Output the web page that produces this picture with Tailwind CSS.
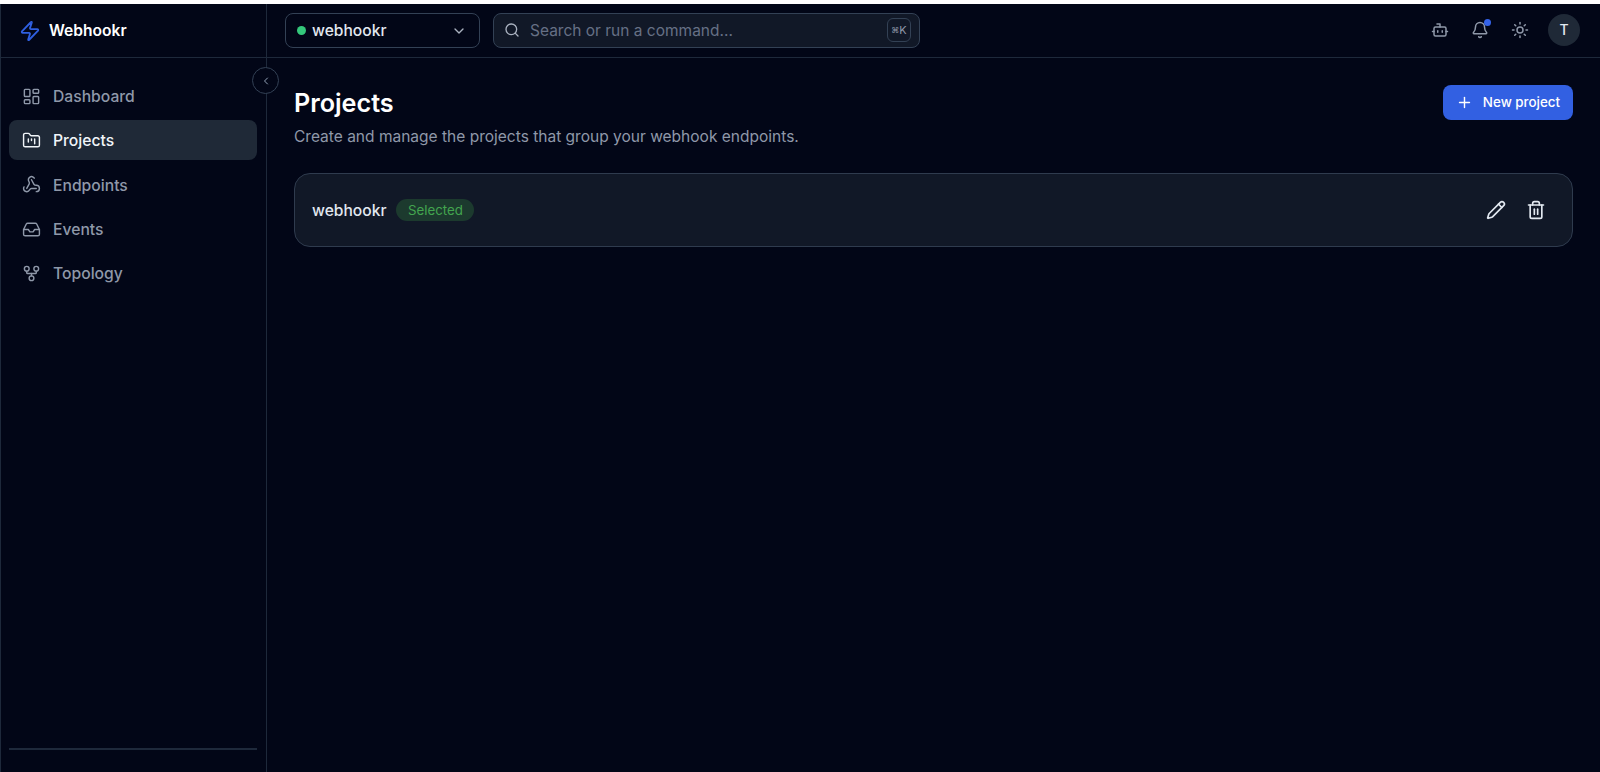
<!DOCTYPE html>
<html lang="en">
<head>
  <meta charset="UTF-8" />
  <title>Webhookr - Projects</title>
  <script src="https://cdn.jsdelivr.net/npm/@tailwindcss/browser@4"></script>
</head>
<body class="bg-white h-[772px] overflow-hidden font-['Inter',sans-serif] flex flex-col">
  <div class="h-1 bg-white"></div>
  <div class="flex-1 flex bg-[#020617] relative">
    <!-- Sidebar -->
    <aside class="w-[267px] shrink-0 border-l border-r border-[#1e293b] flex flex-col relative">
      <div class="h-[54px] border-b border-[#1e293b] flex items-center pl-[18px] gap-2">
        <svg class="w-[22px] h-[22px] text-[#2f5fe0]" viewBox="0 0 24 24" fill="none" stroke="currentColor" stroke-width="2" stroke-linecap="round" stroke-linejoin="round"><path d="M4 14a1 1 0 0 1-.78-1.63l9.9-10.2a.5.5 0 0 1 .86.46l-1.92 6.02A1 1 0 0 0 13 10h7a1 1 0 0 1 .78 1.63l-9.9 10.2a.5.5 0 0 1-.86-.46l1.92-6.02A1 1 0 0 0 11 14z"/></svg>
        <span class="text-white text-[15.6px] font-semibold pt-[1px]">Webhookr</span>
      </div>
      <nav class="flex-1 pl-2 pr-[9px] pt-[18px] flex flex-col gap-[4.4px] text-[15.7px] font-medium text-[#8f98a9]">
        <a class="h-10 flex items-center gap-3 px-[13px] rounded-lg">
          <svg class="w-[19px] h-[19px]" viewBox="0 0 24 24" fill="none" stroke="currentColor" stroke-width="1.8" stroke-linecap="round" stroke-linejoin="round"><rect width="7" height="9" x="3" y="3" rx="1"/><rect width="7" height="5" x="14" y="3" rx="1"/><rect width="7" height="9" x="14" y="12" rx="1"/><rect width="7" height="5" x="3" y="16" rx="1"/></svg>
          <span class="pt-[1px]">Dashboard</span>
        </a>
        <a class="h-10 flex items-center gap-3 px-[13px] rounded-lg bg-[#1f2937] text-[#f1f5f9]">
          <svg class="w-[19px] h-[19px]" viewBox="0 0 24 24" fill="none" stroke="currentColor" stroke-width="1.8" stroke-linecap="round" stroke-linejoin="round"><path d="M4 20h16a2 2 0 0 0 2-2V8a2 2 0 0 0-2-2h-7.93a2 2 0 0 1-1.66-.9l-.82-1.2A2 2 0 0 0 7.93 3H4a2 2 0 0 0-2 2v13c0 1.1.9 2 2 2Z"/><path d="M8 10v4"/><path d="M12 10v2"/><path d="M16 10v6"/></svg>
          <span>Projects</span>
        </a>
        <a class="h-10 flex items-center gap-3 px-[13px] rounded-lg">
          <svg class="w-[19px] h-[19px]" viewBox="0 0 24 24" fill="none" stroke="currentColor" stroke-width="1.8" stroke-linecap="round" stroke-linejoin="round"><path d="M18 16.98h-5.99c-1.1 0-1.95.94-2.48 1.9A4 4 0 0 1 2 17c.01-.7.2-1.4.57-2"/><path d="m6 17 3.13-5.78c.53-.97.1-2.18-.5-3.1a4 4 0 1 1 6.89-4.06"/><path d="m12 6 3.13 5.73C15.66 12.7 16.9 13 18 13a4 4 0 0 1 0 8"/></svg>
          <span class="pt-[1px]">Endpoints</span>
        </a>
        <a class="h-10 flex items-center gap-3 px-[13px] rounded-lg">
          <svg class="w-[19px] h-[19px]" viewBox="0 0 24 24" fill="none" stroke="currentColor" stroke-width="1.8" stroke-linecap="round" stroke-linejoin="round"><polyline points="22 12 16 12 14 15 10 15 8 12 2 12"/><path d="M5.45 5.11 2 12v6a2 2 0 0 0 2 2h16a2 2 0 0 0 2-2v-6l-3.45-6.89A2 2 0 0 0 16.76 4H7.24a2 2 0 0 0-1.79 1.11z"/></svg>
          <span class="pt-[1px]">Events</span>
        </a>
        <a class="h-10 flex items-center gap-3 px-[13px] rounded-lg">
          <svg class="w-[19px] h-[19px]" viewBox="0 0 24 24" fill="none" stroke="currentColor" stroke-width="1.8" stroke-linecap="round" stroke-linejoin="round"><circle cx="12" cy="18" r="3"/><circle cx="6" cy="6" r="3"/><circle cx="18" cy="6" r="3"/><path d="M18 9v2c0 .6-.4 1-1 1H7c-.6 0-1-.4-1-1V9"/><path d="M12 12v3"/></svg>
          <span>Topology</span>
        </a>
      </nav>
      <div class="h-[2px] bg-[#1e293b] ml-2 mr-[9px] mb-[22px]"></div>
      <!-- Collapse toggle sits over the sidebar border -->
      <button class="absolute top-[63px] -right-[13px] w-[27px] h-[27px] rounded-full border border-[#334155] bg-[#020617] text-[#94a3b8] flex items-center justify-center">
        <svg class="w-3 h-3" viewBox="0 0 24 24" fill="none" stroke="currentColor" stroke-width="2" stroke-linecap="round" stroke-linejoin="round"><path d="m15 18-6-6 6-6"/></svg>
      </button>
    </aside>

    <div class="flex-1 flex flex-col min-w-0">
      <!-- Top bar -->
      <header class="h-[54px] border-b border-[#1e293b] flex items-center pl-[18px] pr-5 pb-[1px]">
        <div class="w-[195px] h-[35px] rounded-lg border border-[#334155] flex items-center pl-[11px] pr-[12px] text-[15.6px] font-medium text-[#e2e8f0]">
          <span class="w-[9px] h-[9px] rounded-full bg-[#34c77b] mr-[6px]"></span>
          <span class="pt-[2px]">webhookr</span>
          <svg class="w-4 h-4 ml-auto mt-[1px] text-[#aab2c0]" viewBox="0 0 24 24" fill="none" stroke="currentColor" stroke-width="2" stroke-linecap="round" stroke-linejoin="round"><path d="m6 9 6 6 6-6"/></svg>
        </div>
        <div class="ml-[13px] w-[427px] h-[35px] rounded-lg border border-[#334155] bg-[#111827] flex items-center pl-[10px] pr-2 text-[15.5px] text-[#667085]">
          <svg class="w-4 h-4 text-[#aab2c0] mr-[10px]" viewBox="0 0 24 24" fill="none" stroke="currentColor" stroke-width="2" stroke-linecap="round" stroke-linejoin="round"><circle cx="11" cy="11" r="8"/><path d="m21 21-4.3-4.3"/></svg>
          <span class="pt-[2px]">Search or run a command...</span>
          <span class="ml-auto w-6 h-6 rounded-md border border-[#334155] flex items-center justify-center text-[11px] text-[#8f98a9]"><span class="text-[8px]">⌘</span>K</span>
        </div>
        <div class="ml-auto flex items-center text-[#8f98a9]">
          <svg class="w-[18px] h-[18px]" viewBox="0 0 24 24" fill="none" stroke="currentColor" stroke-width="2" stroke-linecap="round" stroke-linejoin="round"><path d="M12 8V4H8"/><rect width="16" height="12" x="4" y="8" rx="2"/><path d="M2 14h2"/><path d="M20 14h2"/><path d="M15 13v2"/><path d="M9 13v2"/></svg>
          <div class="relative ml-[22px]">
            <svg class="w-[18px] h-[18px]" viewBox="0 0 24 24" fill="none" stroke="currentColor" stroke-width="2" stroke-linecap="round" stroke-linejoin="round"><path d="M10.268 21a2 2 0 0 0 3.464 0"/><path d="M3.262 15.326A1 1 0 0 0 4 17h16a1 1 0 0 0 .74-1.673C19.41 13.956 18 12.499 18 8A6 6 0 0 0 6 8c0 4.499-1.411 5.956-2.738 7.326"/></svg>
            <span class="absolute -top-[2px] -right-[2px] w-[7px] h-[7px] rounded-full bg-[#3563e9]"></span>
          </div>
          <svg class="w-[18px] h-[18px] ml-[22px]" viewBox="0 0 24 24" fill="none" stroke="currentColor" stroke-width="2" stroke-linecap="round" stroke-linejoin="round"><circle cx="12" cy="12" r="4"/><path d="M12 2v2"/><path d="M12 20v2"/><path d="m4.93 4.93 1.41 1.41"/><path d="m17.66 17.66 1.41 1.41"/><path d="M2 12h2"/><path d="M20 12h2"/><path d="m6.34 17.66-1.41 1.41"/><path d="m19.07 4.93-1.41 1.41"/></svg>
          <div class="ml-[19px] w-8 h-8 rounded-full bg-[#1f2937] flex items-center justify-center text-sm font-medium text-[#e2e8f0]">T</div>
        </div>
      </header>

      <!-- Page content -->
      <main class="flex-1 pl-[27px] pr-[27px] pt-[27px]">
        <div class="flex items-start justify-between">
          <div>
            <h1 class="text-[25.2px] leading-[36px] font-semibold text-white">Projects</h1>
            <p class="text-[15.52px] leading-6 mt-1 text-[#8f98a9]">Create and manage the projects that group your webhook endpoints.</p>
          </div>
          <button class="w-[130px] h-[35px] rounded-lg bg-[#3260e2] text-white text-[13.4px] font-medium flex items-center justify-center gap-[10px]">
            <svg class="w-[17px] h-[17px]" viewBox="0 0 24 24" fill="none" stroke="currentColor" stroke-width="2" stroke-linecap="round" stroke-linejoin="round"><path d="M5 12h14"/><path d="M12 5v14"/></svg>
            New project
          </button>
        </div>
        <div class="mt-[24px] h-[74px] rounded-2xl border border-[#2f3b4e] bg-[#111827] flex items-center pl-[17px] pr-[26px]">
          <span class="text-[15.6px] font-medium text-[#e2e8f0] pt-[1px]">webhookr</span>
          <span class="ml-[10px] h-[22px] px-[11.5px] pt-[1px] rounded-full bg-[#1c3a2e] text-[#43a54f] text-[13.3px] flex items-center">Selected</span>
          <div class="ml-auto flex items-center gap-[20px] text-[#e2e8f0]">
            <svg class="w-5 h-5" viewBox="0 0 24 24" fill="none" stroke="currentColor" stroke-width="2" stroke-linecap="round" stroke-linejoin="round"><path d="M21.174 6.812a1 1 0 0 0-3.986-3.987L3.842 16.174a2 2 0 0 0-.5.83l-1.321 4.352a.5.5 0 0 0 .623.622l4.353-1.32a2 2 0 0 0 .83-.497z"/><path d="m15 5 4 4"/></svg>
            <svg class="w-5 h-5" viewBox="0 0 24 24" fill="none" stroke="currentColor" stroke-width="2" stroke-linecap="round" stroke-linejoin="round"><path d="M3 6h18"/><path d="M19 6v14c0 1-1 2-2 2H7c-1 0-2-1-2-2V6"/><path d="M8 6V4c0-1 1-2 2-2h4c1 0 2 1 2 2v2"/><line x1="10" x2="10" y1="11" y2="17"/><line x1="14" x2="14" y1="11" y2="17"/></svg>
          </div>
        </div>
      </main>
    </div>
  </div>
</body>
</html>
